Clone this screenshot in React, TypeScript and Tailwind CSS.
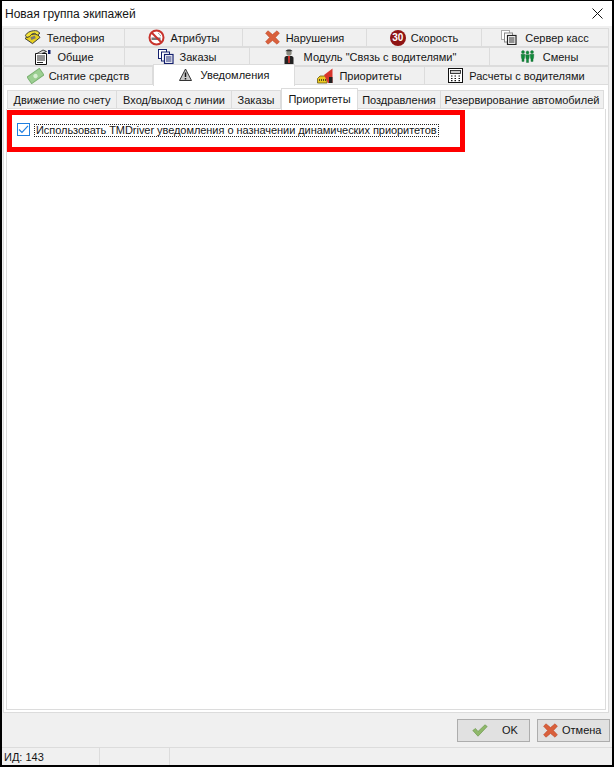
import React from "react";

const Phone = () => (
  <svg width="17" height="15" viewBox="0 0 18 16"><path d="M1 9 L9 14.5 L17 8 L14 4 L6 5 Z" fill="#e8d020" stroke="#333" strokeWidth="1"/><path d="M1.5 6 C3 2 9 0 14 1 L17 3.5 L14 5.5 L11.5 3.5 C9 3.5 7 5 6 7 L3 8 Z" fill="#f3e23a" stroke="#333" strokeWidth="1"/><rect x="7" y="7" width="5" height="3" fill="#777" transform="rotate(-20 9 8)"/></svg>
);
const NoSmoke = () => (
  <svg width="17" height="17" viewBox="0 0 17 17"><circle cx="8.5" cy="8.5" r="7" fill="#fff" stroke="#c8332c" strokeWidth="2"/><rect x="3.5" y="8.5" width="9" height="2.5" fill="#777"/><path d="M10 4 C12 5 11 6 13 7" stroke="#999" fill="none"/><path d="M3.5 3.5 L13.5 13.5" stroke="#c8332c" strokeWidth="2"/></svg>
);
const RedX = ({ s = 15 }: { s?: number }) => (
  <svg width={s} height={s} viewBox="0 0 15 15"><path d="M3 .8 L7.5 4.6 L12 .8 L14.4 3.2 L10.4 7.5 L14.4 11.8 L12 14.2 L7.5 10.4 L3 14.2 L.6 11.8 L4.6 7.5 L.6 3.2 Z" fill="#d9603c" stroke="#c04a2a" strokeWidth=".6"/></svg>
);
const Speed = () => (
  <span className="flex h-[16px] w-[16px] items-center justify-center rounded-full bg-[#8f1414] text-[10px] font-bold leading-none text-white">30</span>
);
const Docs = ({ blue, light }: { blue?: boolean; light?: boolean }) => {
  const c = blue ? "#14206e" : "#222";
  return (
    <svg width="16" height="15" viewBox="0 0 16 15"><rect x=".5" y=".5" width="8" height="9" fill="#fff" stroke={light ? "#aaa" : c}/><rect x="3.5" y="3" width="8" height="9" fill="#fff" stroke={light ? "#888" : c}/><rect x="6.5" y="5.5" width="8.5" height="9" fill="#fff" stroke={c} strokeWidth="1.2"/><path d="M8 8h5.5M8 10h5.5M8 12h5.5" stroke={c}/></svg>
  );
};
const Notepad = () => (
  <svg width="17" height="16" viewBox="0 0 17 16"><path d="M1.5 4.5 H12.5 V15.5 H1.5 Z" fill="#fff" stroke="#111"/><path d="M3 7h8M3 9h8M3 11h8M3 13.5h6" stroke="#111" strokeWidth=".9"/><path d="M3 4.5 L9 1 L12.5 2.5 L8 4.5" fill="#ddd" stroke="#111" strokeWidth=".8"/><rect x="14" y="1" width="2.5" height="4" fill="#14206e"/></svg>
);
const Driver = () => (
  <svg width="12" height="17" viewBox="0 0 12 17"><path d="M1.5 17 V10 C1.5 8.5 3 8 4 8 H8 C9 8 10.5 8.5 10.5 10 V17 Z" fill="#222"/><path d="M5 8 H7 L6.7 15 H5.3 Z" fill="#d8342c"/><circle cx="6" cy="5" r="2.7" fill="#8a8a80"/><path d="M2.5 3.2 C3 1 9 1 9.5 3.2 Z" fill="#333"/></svg>
);
const People = () => (
  <svg width="15" height="15" viewBox="0 0 20 17"><g fill="#0f8a3a" stroke="#0a5f28" strokeWidth=".5"><circle cx="4" cy="2.5" r="2"/><circle cx="10" cy="3" r="2"/><circle cx="16" cy="2.5" r="2"/><path d="M1.5 5.5 H6.5 L6 11 H5.4 V15 H2.6 V11 H2 Z"/><path d="M7.5 6 H12.5 L12 11.5 H11.4 V16.5 H8.6 V11.5 H8 Z"/><path d="M13.5 5.5 H18.5 L18 11 H17.4 V15 H14.6 V11 H14 Z"/></g></svg>
);
const Money = () => (
  <svg width="17" height="16" viewBox="0 0 17 16"><g transform="rotate(-35 8.5 8)"><rect x="1" y="4" width="15" height="8" fill="#9ccf92" stroke="#79b06f"/><circle cx="8.5" cy="8" r="2.2" fill="#d8eed2"/></g></svg>
);
const Warn = () => (
  <svg width="13" height="13" viewBox="0 0 13 13"><path d="M6.5 1 L12.5 12.5 H.5 Z" fill="#c8c8c8" stroke="#333"/><path d="M6.5 4.5 V9 M6.5 10 V11.5" stroke="#111" strokeWidth="1.5"/></svg>
);
const Taxi = () => (
  <svg width="16" height="16" viewBox="0 0 16 16"><path d="M.5 15 V10.5 L3 8 H8 L10 10 V15 Z" fill="#ecc81e" stroke="#6b5a10" strokeWidth=".8"/><path d="M2 12h7" stroke="#222" strokeDasharray="1 1" strokeWidth="1.5"/><path d="M7 7 L15.5 .5 V15 H11 Z" fill="#d8342c"/><rect x="12" y="9" width="3.5" height="6" fill="#222"/></svg>
);
const Calc = () => (
  <svg width="15" height="15" viewBox="0 0 15 15"><rect x=".5" y=".5" width="14" height="14" fill="#fff" stroke="#111"/><rect x="2.5" y="2.5" width="10" height="3" fill="#ccc" stroke="#111" strokeWidth=".8"/><path d="M3 8h1.5M6.5 8H8M10.5 8H12M3 10.5h1.5M6.5 10.5H8M10.5 10.5H12M3 12.7h1.5M6.5 12.7H8M10.5 12.7H12" stroke="#111" strokeWidth="1.2"/></svg>
);
const Check = () => (
  <svg width="16" height="13" viewBox="0 0 16 13"><path d="M.8 6.5 L3.5 4.5 L6 7.5 L13 .8 L15.2 2.5 L6 12.2 Z" fill="#8fb86a" stroke="#6f9a50" strokeWidth=".7"/></svg>
);

type T = { w: number; label: string; icon?: React.ReactNode; gap?: number; active?: boolean };

const row1: T[] = [
  { w: 122, label: "Телефония", icon: <Phone />, gap: 6 },
  { w: 118, label: "Атрибуты", icon: <NoSmoke />, gap: 6 },
  { w: 124, label: "Нарушения", icon: <RedX />, gap: 6 },
  { w: 115, label: "Скорость", icon: <Speed />, gap: 5 },
  { w: 127, label: "Сервер касс", icon: <Docs light />, gap: 8 },
];
const row2: T[] = [
  { w: 122, label: "Общие", icon: <Notepad />, gap: 6 },
  { w: 125, label: "Заказы", icon: <Docs blue />, gap: 6 },
  { w: 240, label: "Модуль \"Связь с водителями\"", icon: <Driver />, gap: 9 },
  { w: 119, label: "Смены", icon: <People />, gap: 8 },
];
const row3: T[] = [
  { w: 150, label: "Снятие средств", icon: <Money />, gap: 5 },
  { w: 142, label: "Уведомления", icon: <Warn />, gap: 9, active: true },
  { w: 130, label: "Приоритеты", icon: <Taxi />, gap: 6 },
  { w: 184, label: "Расчеты с водителями", icon: <Calc />, gap: 6 },
];
const inner: T[] = [
  { w: 110, label: "Движение по счету" },
  { w: 115, label: "Вход/выход с линии" },
  { w: 49, label: "Заказы" },
  { w: 77, label: "Приоритеты", active: true },
  { w: 83, label: "Поздравления" },
  { w: 163, label: "Резервирование автомобилей" },
];

function TabRow({ tabs }: { tabs: T[] }) {
  return (
    <div className="flex h-[19px]">
      {tabs.map((t) => (
        <div
          key={t.label}
          style={{ width: t.w, gap: t.gap }}
          className={
            t.active
              ? "relative z-10 -mt-[2px] flex h-[22px] items-center justify-center border-x border-t border-[#dcdcdc] bg-white pb-[2px]"
              : "flex h-[19px] items-center justify-center border-b border-r border-t border-[#dcdcdc] bg-[#f0f0f0] first:border-l"
          }
        >
          {t.icon}
          <span className="whitespace-nowrap pt-px">{t.label}</span>
        </div>
      ))}
    </div>
  );
}

export default function App() {
  return (
    <div
      className="flex h-[767px] w-[614px] flex-col bg-black pb-[2px] pl-[2px] pr-[2px] pt-[1px] text-[11px] leading-none text-[#151515]"
      style={{ fontFamily: '"Liberation Sans", Arial, sans-serif' }}
    >
      <div className="flex h-[25px] shrink-0 items-center justify-between bg-white pl-[3px] pr-[9px] text-[12px]">
        <span>Новая группа экипажей</span>
        <svg width="11" height="11" viewBox="0 0 11 11"><path d="M.5 .5 L10.5 10.5 M10.5 .5 L.5 10.5" stroke="#111" strokeWidth="1"/></svg>
      </div>
      <div className="flex min-h-0 flex-1 flex-col bg-[#f0f0f0]">
        <div className="flex min-h-0 flex-1 flex-col pl-px pr-[3px] pt-[2px]">
          <TabRow tabs={row1} />
          <TabRow tabs={row2} />
          <TabRow tabs={row3} />
          <div className="flex min-h-0 flex-1 flex-col border border-t-0 border-[#dcdcdc] bg-white px-[2px] pb-[2px] pt-[5px]">
            <div className="flex h-[19px] shrink-0 pl-px">
              {inner.map((t) => (
                <div
                  key={t.label}
                  style={{ width: t.w }}
                  className={
                    t.active
                      ? "relative z-10 -mt-[2px] flex h-[22px] items-center justify-center border-x border-t border-[#dcdcdc] bg-white pb-[2px]"
                      : "flex items-center justify-center border-b border-r border-t border-[#dcdcdc] bg-[#f0f0f0] first:border-l"
                  }
                >
                  <span className="whitespace-nowrap pt-px">{t.label}</span>
                </div>
              ))}
            </div>
            <div className="relative min-h-0 flex-1 border border-t-0 border-[#dcdcdc] bg-white pl-[10px] pt-[14px]">
              <div className="flex items-start gap-[4px]">
                <span className="flex h-[13px] w-[13px] items-center justify-center border border-[#1f7fe0] bg-white">
                  <svg width="11" height="9" viewBox="0 0 12 10"><path d="M1 5 L4.3 8.3 L11 1" fill="none" stroke="#1f7fe0" strokeWidth="1.3"/></svg>
                </span>
                <span className="mt-[1px] whitespace-nowrap border border-dotted border-[#222] px-px tracking-[-0.05px]">
                  Использовать TMDriver уведомления о назначении динамических приоритетов
                </span>
              </div>
              <div className="absolute left-0 top-px h-[42px] w-[458px] border-[5px] border-[#ff0000]" />
            </div>
          </div>
        </div>
        <div className="flex h-[35px] shrink-0 items-center justify-end gap-[7px] border-b border-[#dcdcdc] pr-[2px]">
          <div className="flex h-[23px] w-[73px] items-center gap-[14px] border border-[#adadad] bg-[#e1e1e1] pl-[14px]">
            <Check />
            <span>OK</span>
          </div>
          <div className="flex h-[23px] w-[73px] items-center gap-[4px] border border-[#adadad] bg-[#e1e1e1] pl-[5px]">
            <RedX />
            <span>Отмена</span>
          </div>
        </div>
        <div className="flex h-[17px] shrink-0 items-center">
          <div className="flex h-full w-[98px] items-center border-r border-[#dcdcdc] pl-[2px] pt-[2px]">ИД: 143</div>
          <div className="h-full w-[70px] border-r border-[#dcdcdc]" />
        </div>
      </div>
    </div>
  );
}
